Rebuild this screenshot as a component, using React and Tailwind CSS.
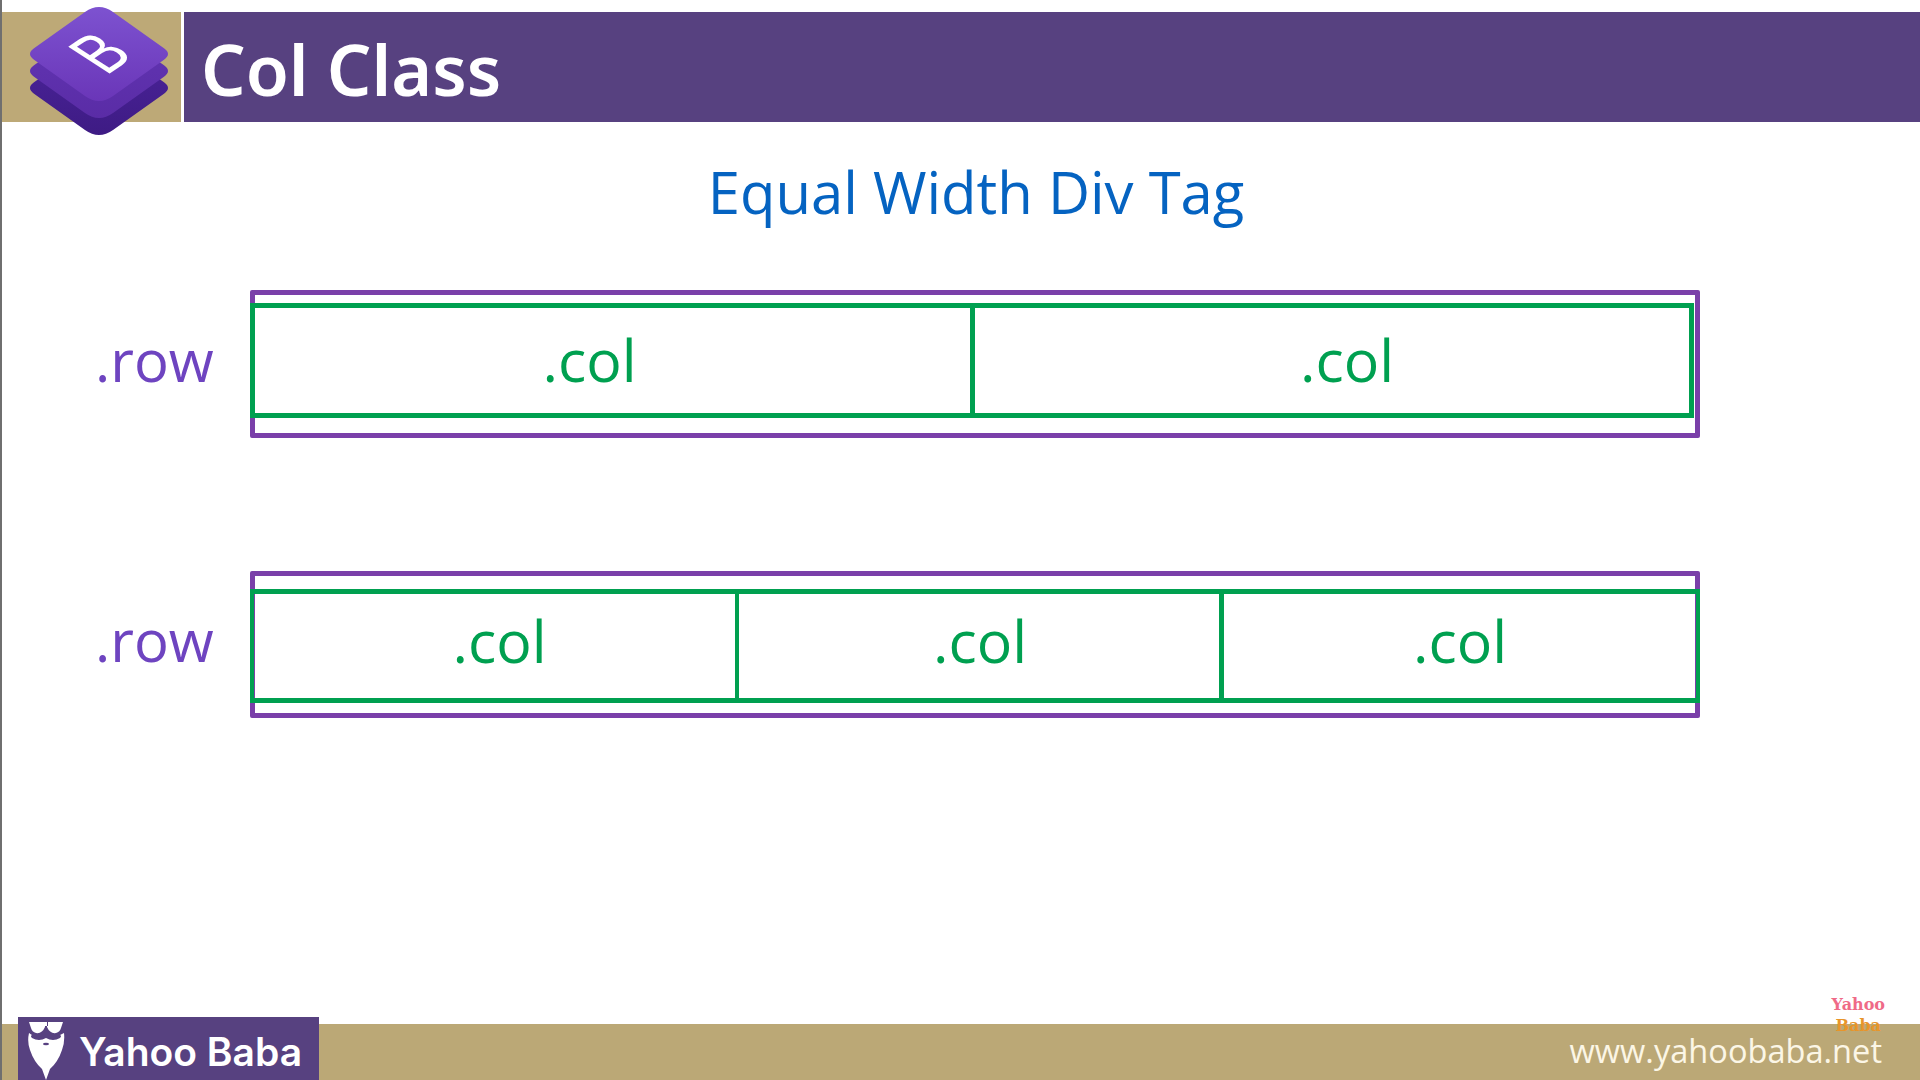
const openSans = "font-['Open_Sans','Noto_Sans',sans-serif]"

function BootstrapLogo() {
  const layer = 'M83 12 Q97 2 111 12 L162 48.3 Q170 54 162 59.7 L111 96 Q97 106 83 96 L32 59.7 Q24 54 32 48.3 Z'
  return (
    <svg className="absolute left-0 top-[-12px]" width="196" height="146" viewBox="0 0 196 146">
      <defs>
        <linearGradient id="top" x1="0" y1="0" x2="0" y2="1">
          <stop offset="0" stopColor="#7d52d0" />
          <stop offset="1" stopColor="#6a36b8" />
        </linearGradient>
        <linearGradient id="mid" x1="0" y1="0" x2="0" y2="1">
          <stop offset="0" stopColor="#6236b4" />
          <stop offset="1" stopColor="#5a2ca6" />
        </linearGradient>
        <linearGradient id="low" x1="0" y1="0" x2="0" y2="1">
          <stop offset="0" stopColor="#4c259c" />
          <stop offset="1" stopColor="#3e1b84" />
        </linearGradient>
      </defs>
      <path d={layer} fill="url(#low)" transform="translate(0 34)" />
      <path d={layer} fill="url(#mid)" transform="translate(0 17)" />
      <path d={layer} fill="url(#top)" />
      <text
        transform="matrix(.44 -.3 .6 .39 104 76)"
        fontSize="100"
        fontFamily="'Liberation Sans', sans-serif"
        fill="#ffffff"
      >
        B
      </text>
    </svg>
  )
}

function BeardIcon() {
  return (
    <svg width="38" height="58" viewBox="0 0 38 58" className="shrink-0">
      {/* 수염 */}
      <path d="M1 11 Q-1 20 2 28 Q6 40 14 47 L18 58 L22 47 Q30 40 34 28 Q37 20 36 11 Q18 4 1 11 Z" fill="#fff" />
      {/* 얼굴 띠와 입 */}
      <path d="M0 0 H38 V10 Q34 12 32 13 Q34 14 32 16 Q25 20 18 16 Q11 20 4 16 Q2 14 4 13 Q2 12 0 10 Z" fill="#574180" />
      <ellipse cx="18" cy="22" rx="3" ry="1.2" fill="#574180" />
      {/* 선글라스 */}
      <path d="M1 0 H17 V5 Q14 12 8 11 Q4 10 3 6 Z M35 0 H19 V5 Q22 12 28 11 Q32 10 33 6 Z M16 0 H20 V4 H16 Z" fill="#fff" />
    </svg>
  )
}

function ColCell({ className = '', children }) {
  return (
    <div className={`flex items-center justify-center text-[59px] leading-none text-[#00a050] ${className}`}>
      <span>{children}</span>
    </div>
  )
}

function RowLabel() {
  return <div className="w-[155px] shrink-0 pb-[9px] text-[58px] leading-none text-[#6e44c0]">.row</div>
}

function App() {
  return (
    <div className={`flex h-[1080px] w-[1920px] flex-col overflow-hidden border-l-2 border-[#6f6f6f] bg-white ${openSans}`}>
      {/* 헤더 */}
      <div className="mt-3 flex h-[110px] shrink-0 gap-[3px]">
        <div className="relative w-[179px] shrink-0 bg-[#bda977]">
          <BootstrapLogo />
        </div>
        <div className="flex flex-1 items-center bg-[#574180] pl-[17px] pt-[3px] leading-none text-white">
          <span className="font-['Noto_Sans',sans-serif] text-[70px] font-semibold leading-none">Col Class</span>
        </div>
      </div>

      {/* 본문 */}
      <div className="flex-1 pl-[93px]">
        <h1 className="h-[168px] w-[1762px] pt-[34px] text-center text-[58px] leading-[72px] font-normal text-[#0563c1]">
          Equal Width Div Tag
        </h1>

        <div className="flex items-center">
          <RowLabel />
          <div className="h-[148px] w-[1450px] rounded-[2px] border-[5px] border-[#7a3fa9] pt-[8px]">
            <div className="-ml-[5px] flex h-[115px] w-[1444px] border-[5px] border-[#00a050]">
              <ColCell className="w-[715px] pb-[3px] pr-[46px]">.col</ColCell>
              <ColCell className="flex-1 border-l-[5px] border-[#00a050] pb-[3px] pl-[30px]">.col</ColCell>
            </div>
          </div>
        </div>

        <div className="mt-[133px] flex items-center">
          <RowLabel />
          <div className="h-[147px] w-[1450px] rounded-[2px] border-[5px] border-[#7a3fa9] pt-[13px]">
            <div className="-mx-[5px] flex h-[114px] border-[4px] border-t-[5px] border-b-[5px] border-[#00a050]">
              <ColCell className="w-[481px] pb-[11px] pl-[10px]">.col</ColCell>
              <ColCell className="w-[484px] border-l-[4px] border-[#00a050] pb-[11px] pl-[2px]">.col</ColCell>
              <ColCell className="flex-1 border-l-[5px] border-[#00a050] pb-[11px]">.col</ColCell>
            </div>
          </div>
        </div>
      </div>

      {/* 하단 바 */}
      <div className="relative flex h-[56px] shrink-0 items-end justify-between bg-[#bba876] pl-[16px] pr-[38px]">
        <div className="flex h-[63px] w-[301px] items-end gap-[13px] bg-[#574180] pl-[10px]">
          <BeardIcon />
          <span className="pb-[9px] font-['Inter',sans-serif] text-[39px] font-semibold leading-none text-white">Yahoo Baba</span>
        </div>
        <span className="pb-[14px] text-[32.6px] leading-[30px] text-[#fbf6e6]">www.yahoobaba.net</span>
        <div className="absolute right-[35px] top-[-30px] text-center font-['DejaVu_Serif',serif] text-[16px] font-bold leading-[21px]">
          <div className="text-[#ef6a87]">Yahoo</div>
          <div className="text-[#e8952a]">Baba</div>
        </div>
      </div>
    </div>
  )
}

export default App
